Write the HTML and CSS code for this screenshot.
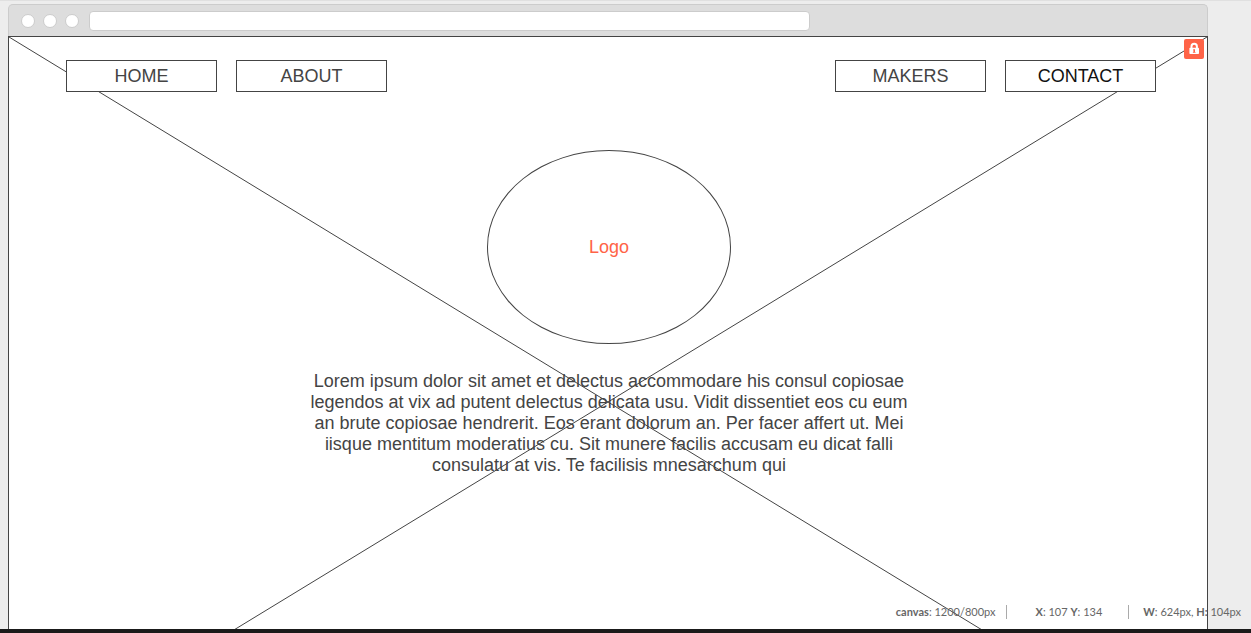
FILE: index.html
```html
<!DOCTYPE html>
<html lang="en">
<head>
<meta charset="utf-8">
<title>Wireframe</title>
<link rel="stylesheet" href="styles.css">
</head>
<body>
<main class="workspace">
  <div class="browser">
    <header class="chrome">
      <span class="dot"></span>
      <span class="dot"></span>
      <span class="dot"></span>
      <input class="address" type="text" aria-label="Address">
    </header>
    <section class="canvas">
      <svg class="cross" viewBox="0 0 1200 730" preserveAspectRatio="none" aria-hidden="true">
        <path d="M0 0L1200 730M1200 0L0 730"/>
      </svg>
      <nav class="menu">
        <div class="menu-group">
          <button class="menu-item" type="button">HOME</button>
          <button class="menu-item" type="button">ABOUT</button>
        </div>
        <div class="menu-group">
          <button class="menu-item" type="button">MAKERS</button>
          <button class="menu-item menu-item-active" type="button">CONTACT</button>
        </div>
      </nav>
      <div class="logo">Logo</div>
      <p class="copy">Lorem ipsum dolor sit amet et delectus accommodare his consul copiosae legendos at vix ad putent delectus delicata usu. Vidit dissentiet eos cu eum an brute copiosae hendrerit. Eos erant dolorum an. Per facer affert ut. Mei iisque mentitum moderatius cu. Sit munere facilis accusam eu dicat falli consulatu at vis. Te facilisis mnesarchum qui</p>
      <button class="lock" type="button" aria-label="Unlock">
        <svg viewBox="0 0 20 20" aria-hidden="true">
          <path class="lock-shackle" d="M7.500 9V7.500a2.700 2.700 0 0 1 5.400 0V9"/>
          <path class="lock-body" d="M6.200 8.800h8q.8 0 .8.8v4.600q0 .8-.8.8h-8q-.8 0-.8-.8V9.600q0-.8.8-.8z"/>
          <path class="lock-key" d="M9.200 10.200h1.800v2.800h.5v.8H8.900v-.8h.5v-1.800h-.2z"/>
        </svg>
      </button>
    </section>
  </div>
  <div class="status">
    <span class="status-item"><b>canvas</b>: 1200/800px</span>
    <span class="status-item status-position"><b>X</b>: 107 <b>Y</b>: 134</span>
    <span class="status-item"><b>W</b>: 624px, <b>H:</b> 104px</span>
  </div>
</main>
<footer class="bar"></footer>
</body>
</html>
```
FILE: styles.css
```css
* {
  box-sizing: border-box;
}

body {
  display: flex;
  flex-direction: column;
  height: 100vh;
  margin: 0;
  overflow: hidden;
  background: #ededed;
  color: #444;
  font-family: "Liberation Sans", Arial, sans-serif;
  font-size: 18px;
  line-height: 21px;
}

button {
  padding: 0;
  font: inherit;
  color: inherit;
}

.workspace {
  position: relative;
  flex: 1;
  min-height: 0;
  overflow: hidden;
  padding: 3px 43px 0 8px;
  border-top: 1px solid #e0e0e0;
}

.chrome {
  display: flex;
  align-items: center;
  gap: 8px;
  height: 32px;
  padding: 0 12px;
  border: 1px solid #ccc;
  border-bottom: 0;
  border-radius: 5px 5px 0 0;
  background: #ddd;
}

.dot {
  width: 14px;
  height: 14px;
  border: 1px solid #ccc;
  border-radius: 50%;
  background: #fff;
}

.address {
  width: 62%;
  max-width: 721px;
  height: 20px;
  margin-left: 2px;
  padding: 0 6px;
  border: 1px solid #ccc;
  border-radius: 4px;
  background: #fff;
  font: 12px "Liberation Sans", Arial, sans-serif;
}

.canvas {
  position: relative;
  height: 732px;
  padding: 23px 49px 0 51px;
  border: 1px solid #444;
  background: #fff;
}

.cross {
  position: absolute;
  inset: 0;
  width: 100%;
  height: 100%;
  fill: none;
  stroke: #444;
}

.cross path {
  vector-effect: non-scaling-stroke;
}

.menu {
  position: relative;
  display: flex;
  justify-content: space-between;
  padding: 0 2px 0 6px;
}

.menu-group {
  display: flex;
  gap: 19px;
}

.menu-item {
  width: 151px;
  height: 32px;
  border: 1px solid #444;
  background: #fff;
}

.menu-item-active {
  color: #111;
}

.logo {
  position: relative;
  display: flex;
  align-items: center;
  justify-content: center;
  width: 244px;
  height: 194px;
  margin: 58px auto 0;
  border: 1px solid #444;
  border-radius: 50%;
  background: #fff;
  color: #ff6347;
}

.copy {
  max-width: 610px;
  margin: 27px auto 0;
  text-align: center;
}

.lock {
  position: absolute;
  top: 2px;
  right: 3px;
  width: 20px;
  height: 20px;
  border: 0;
  border-radius: 2px;
  background: #ff6347;
}

.lock svg {
  display: block;
}

.lock-shackle {
  fill: none;
  stroke: #fff;
  stroke-width: 2;
}

.lock-body {
  fill: #fff;
}

.lock-key {
  fill: #ff6347;
}

.status {
  position: absolute;
  right: 10px;
  bottom: 10px;
  display: flex;
  color: #666;
  font: 11px/14px Lato, sans-serif;
}

.status-position {
  margin: 0 14px 0 10px;
  padding: 0 26px 0 29px;
  border: 1px solid #aaa;
  border-width: 0 1px;
}

.bar {
  height: 4px;
  background: #1a1a1a;
}
```
